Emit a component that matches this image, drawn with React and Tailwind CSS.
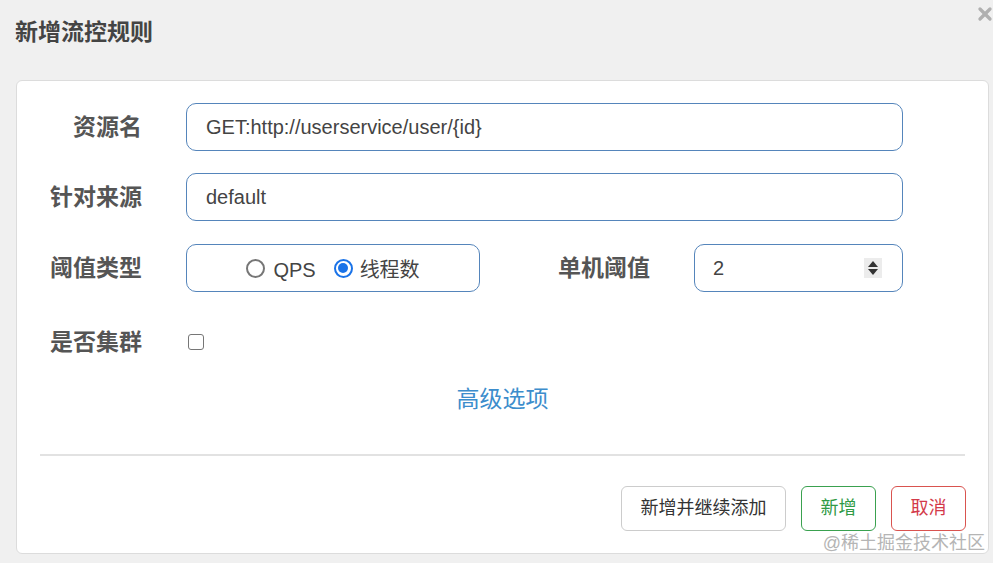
import { X } from "lucide-react";

const font = {
  fontFamily: '"Liberation Sans", Arial, "Noto Sans CJK SC", sans-serif',
};

function Label({ children, className = "" }) {
  return (
    <div
      className={`shrink-0 text-right text-[23px] font-bold text-[#555] ${className}`}
    >
      {children}
    </div>
  );
}

function TextField({ value, className = "" }) {
  return (
    <div
      className={`flex h-[48px] items-center rounded-[10px] border border-[#5585bb] bg-white px-[19px] text-[20px] text-[#444] ${className}`}
    >
      {value}
    </div>
  );
}

export default function App() {
  return (
    <div
      style={font}
      className="relative h-[563px] w-[993px] overflow-hidden bg-[#f0f0f0]"
    >
      <div className="flex h-[80px] items-start justify-between pl-[15px]">
        <h1 className="pt-[15px] text-[23px] font-bold text-[#444]">新增流控规则</h1>
        <X className="-mr-[2px] mt-[4px] h-[20px] w-[20px] text-[#b0b0b0]" strokeWidth={4} />
      </div>

      <div className="ml-[16px] flex h-[474px] w-[973px] flex-col rounded-[6px] border border-[#dcdcdc] bg-white pt-[22px]">
        <div className="flex items-center">
          <Label className="w-[125px]">资源名</Label>
          <TextField
            className="ml-[44px] w-[717px]"
            value="GET:http://userservice/user/{id}"
          />
        </div>

        <div className="mt-[22px] flex items-center">
          <Label className="w-[125px]">针对来源</Label>
          <TextField className="ml-[44px] w-[717px]" value="default" />
        </div>

        <div className="mt-[23px] flex items-center">
          <Label className="w-[125px]">阈值类型</Label>
          <div className="ml-[44px] flex h-[48px] w-[294px] items-center justify-center gap-[18px] rounded-[10px] border border-[#5585bb] text-[20px] text-[#444]">
            <label className="flex items-center gap-[8px]">
              <span className="h-[19px] w-[19px] rounded-full border-2 border-[#767676]" />
              <span className="pt-[3px]">QPS</span>
            </label>
            <label className="flex items-center gap-[7px]">
              <span className="flex h-[19px] w-[19px] items-center justify-center rounded-full border-2 border-[#1a73e8]">
                <span className="h-[10px] w-[10px] rounded-full bg-[#1a73e8]" />
              </span>
              <span className="pt-[3px]">线程数</span>
            </label>
          </div>
          <Label className="w-[170px]">单机阈值</Label>
          <div className="ml-[44px] flex h-[48px] w-[209px] items-center justify-between rounded-[10px] border border-[#5585bb] pl-[18px] pr-[20px] text-[20px] text-[#444]">
            <span>2</span>
            <span className="flex h-[20px] w-[18px] flex-col items-center justify-center gap-[2px] bg-[#ececec]">
              <span className="h-0 w-0 border-x-[5px] border-b-[6px] border-x-transparent border-b-[#333]" />
              <span className="h-0 w-0 border-x-[5px] border-t-[6px] border-x-transparent border-t-[#333]" />
            </span>
          </div>
        </div>

        <div className="mt-[26px] flex h-[48px] items-center">
          <Label className="w-[125px]">是否集群</Label>
          <span className="ml-[46px] h-[16px] w-[16px] rounded-[3px] border-[1.5px] border-[#767676]" />
        </div>

        <div className="mt-[16px] text-center text-[23px] text-[#3c8dcc]">高级选项</div>

        <div className="mx-[23px] mt-[37px] border-t-2 border-[#e2e2e2]" />

        <div className="mt-[30px] flex justify-end gap-[15px] pr-[22px] text-[18px]">
          <button className="h-[45px] w-[165px] rounded-[6px] border border-[#ccc] text-[#333]">
            新增并继续添加
          </button>
          <button className="h-[45px] w-[75px] rounded-[6px] border border-[#3aa14f] text-[#2f9a45]">
            新增
          </button>
          <button className="h-[45px] w-[75px] rounded-[6px] border border-[#d9534f] text-[#d33a4a]">
            取消
          </button>
        </div>
      </div>

      <div className="absolute bottom-[6px] right-[8px] text-[18px] text-[#b5b5b5]">
        @稀土掘金技术社区
      </div>
    </div>
  );
}
